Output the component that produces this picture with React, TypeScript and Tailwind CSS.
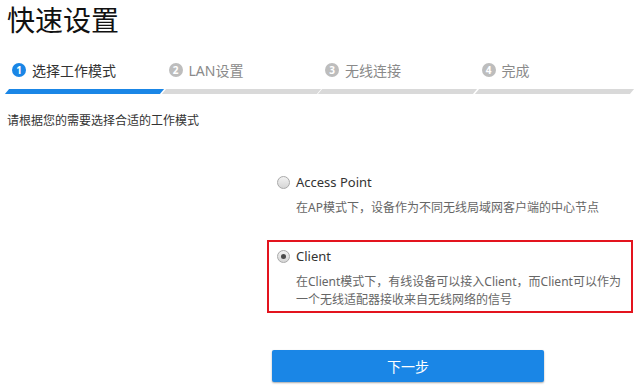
import { useState } from "react"

const steps = ["选择工作模式", "LAN设置", "无线连接", "完成"]

const modes = [
  {
    id: "ap",
    title: "Access Point",
    desc: "在AP模式下，设备作为不同无线局域网客户端的中心节点",
  },
  {
    id: "client",
    title: "Client",
    desc: "在Client模式下，有线设备可以接入Client，而Client可以作为一个无线适配器接收来自无线网络的信号",
  },
]

function Radio({ checked }: { checked: boolean }) {
  return (
    <span className="mt-[4px] flex h-[13px] w-[13px] shrink-0 items-center justify-center rounded-full border border-[#a9a9a9] bg-gradient-to-b from-[#f2f2f2] to-[#d6d6d6]">
      {checked && <span className="h-[5px] w-[5px] rounded-full bg-[#4a4a4a]" />}
    </span>
  )
}

export default function App() {
  const [mode, setMode] = useState("client")

  return (
    <div
      className="h-[388px] w-[643px] overflow-hidden bg-white pl-[7px] text-[#333]"
      style={{ fontFamily: '"Noto Sans", "Noto Sans CJK SC", sans-serif' }}
    >
      <h1 className="h-[40px] text-[28px] leading-[40px] font-normal text-[#111]">快速设置</h1>

      <div className="mt-[20px] grid w-[624px] grid-cols-4 gap-x-[2px]">
        {steps.map((s, i) => (
          <div key={s}>
            <div className="flex h-[20px] items-center gap-[6px] pl-[5px]">
              <span
                className={
                  "flex h-[14px] w-[14px] items-center justify-center rounded-full text-[10px] leading-none font-bold text-white " +
                  (i === 0 ? "bg-[#1a86e6]" : "bg-[#bdbdbd]")
                }
              >
                {i + 1}
              </span>
              <span className={"text-[14px] " + (i === 0 ? "text-[#333]" : "text-[#8a8a8a]")}>{s}</span>
            </div>
            <div
              className={
                "mt-[9px] h-[5px] skew-x-[-40deg] " + (i === 0 ? "bg-[#1a86e6]" : "bg-[#d9d9d9]")
              }
            />
          </div>
        ))}
      </div>

      <p className="mt-[18px] text-[12px] leading-[18px] text-[#333]">请根据您的需要选择合适的工作模式</p>

      <div className="mt-[36px] ml-[260px] w-[366px]">
        {modes.map((m) => (
          <div
            key={m.id}
            onClick={() => setMode(m.id)}
            className={
              "flex cursor-pointer gap-[6px] border-2 pt-[4px] pr-[6px] pb-[2px] pl-[8px] " +
              (m.id === mode ? "border-[#e3141e]" : "h-[74px] border-transparent")
            }
          >
            <Radio checked={m.id === mode} />
            <div>
              <div className="text-[13px] leading-[20px] text-[#333]">{m.title}</div>
              <div className="mt-[7px] text-[12px] leading-[18px] text-[#666]">{m.desc}</div>
            </div>
          </div>
        ))}

        <button className="mt-[37px] ml-[5px] h-[32px] w-[272px] rounded-[2px] bg-[#1a86e6] text-[14px] text-white shadow-[0_1px_2px_rgba(0,0,0,0.35)]">
          下一步
        </button>
      </div>
    </div>
  )
}
